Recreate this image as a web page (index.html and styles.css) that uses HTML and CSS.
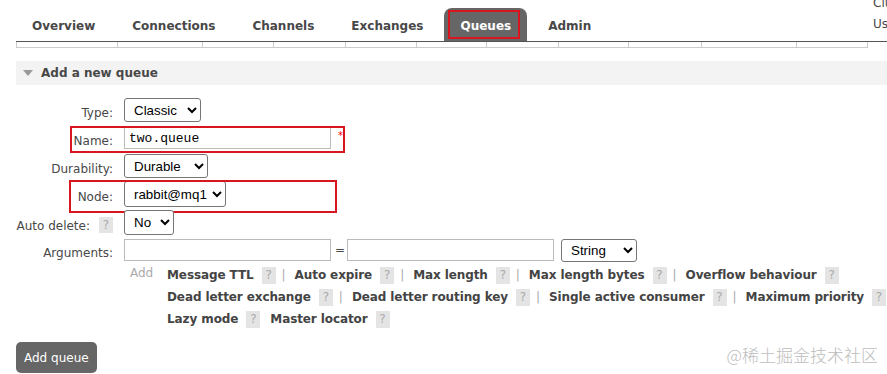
FILE: index.html
```html
<!DOCTYPE html>
<html lang="en">
<head>
    <meta charset="UTF-8">
    <meta name="viewport" content="width=device-width, initial-scale=1.0">
    <title>Queues</title>
    <link rel="stylesheet" href="styles.css">
</head>
<body>
    <div class="header">
        <ul class="tabs">
            <li>Overview</li>
            <li>Connections</li>
            <li>Channels</li>
            <li>Exchanges</li>
            <li class="active">Queues</li>
            <li>Admin</li>
        </ul>
        <div class="login">
            <p>Cluster rabbit@mq1</p>
            <p>User admin</p>
        </div>
    </div>
    <div class="menu-line"></div>
    <div class="sub-strip">
        <span style="width:101px"></span>
        <span style="width:85px"></span>
        <span style="width:71px"></span>
        <span style="width:72px"></span>
        <span style="width:71px"></span>
        <span style="width:70px"></span>
        <span style="width:72px"></span>
        <span style="width:70px"></span>
        <span style="width:73px"></span>
        <span style="width:95px"></span>
        <span style="width:72px"></span>
    </div>

    <div class="section">
        <h2 class="section-title"><span class="arrow"></span>Add a new queue</h2>
        <form class="queue-form">
            <div class="row">
                <label class="label">Type:</label>
                <select class="select select-type">
                    <option>Classic</option>
                    <option>Quorum</option>
                </select>
            </div>
            <div class="row marked marked-name">
                <label class="label">Name:</label>
                <input class="text-input" type="text" value="two.queue">
                <span class="mand">*</span>
            </div>
            <div class="row">
                <label class="label">Durability:</label>
                <select class="select select-durable">
                    <option>Durable</option>
                    <option>Transient</option>
                </select>
            </div>
            <div class="row marked marked-node">
                <label class="label">Node:</label>
                <select class="select select-node">
                    <option>rabbit@mq1</option>
                </select>
            </div>
            <div class="row">
                <label class="label">Auto delete:<span class="help">?</span></label>
                <select class="select select-auto">
                    <option>No</option>
                    <option>Yes</option>
                </select>
            </div>
            <div class="row">
                <label class="label">Arguments:</label>
                <input class="text-input" type="text">
                <span class="equals">=</span>
                <input class="text-input" type="text">
                <select class="select select-string">
                    <option>String</option>
                    <option>Number</option>
                    <option>Boolean</option>
                </select>
            </div>

            <div class="args">
                <div class="args-row">
                    <span class="add">Add</span>
                    <a class="arg-link">Message TTL</a><span class="help">?</span><span class="sep">|</span>
                    <a class="arg-link">Auto expire</a><span class="help">?</span><span class="sep">|</span>
                    <a class="arg-link">Max length</a><span class="help">?</span><span class="sep">|</span>
                    <a class="arg-link">Max length bytes</a><span class="help">?</span><span class="sep">|</span>
                    <a class="arg-link">Overflow behaviour</a><span class="help">?</span>
                </div>
                <div class="args-row indent">
                    <a class="arg-link">Dead letter exchange</a><span class="help">?</span><span class="sep">|</span>
                    <a class="arg-link">Dead letter routing key</a><span class="help">?</span><span class="sep">|</span>
                    <a class="arg-link">Single active consumer</a><span class="help">?</span><span class="sep">|</span>
                    <a class="arg-link">Maximum priority</a><span class="help">?</span>
                </div>
                <div class="args-row indent">
                    <a class="arg-link">Lazy mode</a><span class="help">?</span>
                    <a class="arg-link next">Master locator</a><span class="help">?</span>
                </div>
            </div>

            <button class="add-button" type="button">Add queue</button>
        </form>
    </div>

    <div class="watermark">@稀土掘金技术社区</div>
</body>
</html>
```

FILE: styles.css
```css
* {
    box-sizing: border-box;
    margin: 0;
    padding: 0;
}
html, body {
    overflow: hidden;
}
body {
    width: 887px;
    height: 374px;
    position: relative;
    font-family: "DejaVu Sans", Verdana, sans-serif;
    font-size: 12px;
    color: #484848;
    background-color: #fff;
}

/* top menu */
.header {
    display: flex;
    align-items: flex-start;
    padding-left: 16px;
    height: 41px;
}
.tabs {
    display: flex;
    gap: 5px;
    list-style: none;
    margin-top: 8px;
}
.tabs li {
    height: 33px;
    line-height: 33px;
    padding: 2px 16px 0;
    font-weight: bold;
    white-space: nowrap;
}
.tabs li.active {
    position: relative;
    background-color: #666;
    color: #fff;
    border-radius: 8px 8px 0 0;
}
.tabs li.active::after {
    content: "";
    position: absolute;
    left: 4px;
    right: 7px;
    top: 2px;
    bottom: 2px;
    border: 2px solid #d8161f;
}
.login {
    margin-left: auto;
    width: 14px;
    overflow: hidden;
    white-space: nowrap;
    line-height: 21px;
    margin-top: -7px;
}
.menu-line {
    margin-left: 16px;
    border-top: 1px solid #555;
}
.sub-strip {
    display: flex;
    height: 6px;
    margin-left: 16px;
}
.sub-strip span {
    border-left: 1px solid #ccc;
    border-bottom: 1px solid #ccc;
}
.sub-strip span:last-child {
    border-right: 1px solid #ccc;
}

/* section */
.section {
    margin-top: 13px;
}
.section-title {
    display: flex;
    align-items: center;
    height: 24px;
    margin-left: 16px;
    padding-left: 7px;
    background-color: #f3f3f3;
    font-size: 12px;
    font-weight: bold;
}
.arrow {
    width: 0;
    height: 0;
    margin-right: 8px;
    border-left: 5px solid transparent;
    border-right: 5px solid transparent;
    border-top: 6px solid #999;
}
.queue-form {
    margin-top: 11px;
}
.row {
    position: relative;
    display: flex;
    align-items: center;
    height: 28px;
}
.label {
    width: 113px;
    margin-right: 11px;
    padding-top: 6px;
    text-align: right;
    white-space: nowrap;
}
.help {
    display: inline-block;
    width: 14px;
    height: 17px;
    line-height: 17px;
    margin-left: 8px;
    background-color: #e4e4e4;
    color: #aaa;
    font-weight: normal;
    text-align: center;
}
.label .help {
    margin-left: 9px;
    height: 16px;
    line-height: 16px;
    vertical-align: 1px;
}
.marked::after {
    content: "";
    position: absolute;
    border: 2px solid #d8161f;
}
.marked-name::after {
    left: 70px;
    width: 271px;
    top: 2px;
    height: 23px;
}
.marked-node::after {
    left: 69px;
    width: 264px;
    top: 0;
    height: 29px;
}
.text-input {
    width: 207px;
    height: 22px;
    padding: 0 4px;
    border: 1px solid #bbb;
    font-family: "Liberation Mono", "DejaVu Sans Mono", monospace;
    font-size: 13px;
    color: #000;
}
.mand {
    align-self: flex-start;
    margin-top: 6px;
    margin-left: 7px;
    color: #f00;
    font-size: 10px;
}
.select {
    height: 24px;
    padding-left: 5px;
    border: 1px solid #767676;
    border-radius: 3px;
    background-color: #fff;
    color: #000;
    font-family: "Liberation Sans", Arial, sans-serif;
    font-size: 13.33px;
}
.select-type { width: 77px; }
.select-durable { width: 84px; }
.select-node { width: 102px; height: 26px; }
.select-auto { width: 50px; height: 25px; }
.select-string { width: 76px; height: 23px; margin-left: 7px; }
.equals {
    margin: 0 4px;
    width: 8px;
    text-align: center;
}

/* arguments links */
.args {
    padding-left: 124px;
}
.args-row {
    display: flex;
    align-items: center;
    height: 22px;
    white-space: nowrap;
}
.args-row.indent {
    padding-left: 43px;
}
.add {
    width: 43px;
    padding-left: 6px;
    margin-top: -4px;
    color: #aaa;
}
.arg-link {
    font-weight: bold;
    color: #444;
    letter-spacing: -0.1px;
}
.arg-link.next {
    margin-left: 10px;
}
.sep {
    margin: 0 9px 0 6px;
    color: #aaa;
}
.add-button {
    display: block;
    height: 31px;
    margin: 12px 0 0 16px;
    padding: 0 8px;
    border: none;
    border-radius: 5px;
    background-color: #666;
    color: #fff;
    font-family: "DejaVu Sans", Verdana, sans-serif;
    font-size: 12px;
}

.watermark {
    position: absolute;
    right: 9px;
    bottom: 7px;
    color: #bdbdbd;
    font-family: "Noto Sans CJK SC", sans-serif;
    font-size: 17px;
    font-weight: 300;
}
```
